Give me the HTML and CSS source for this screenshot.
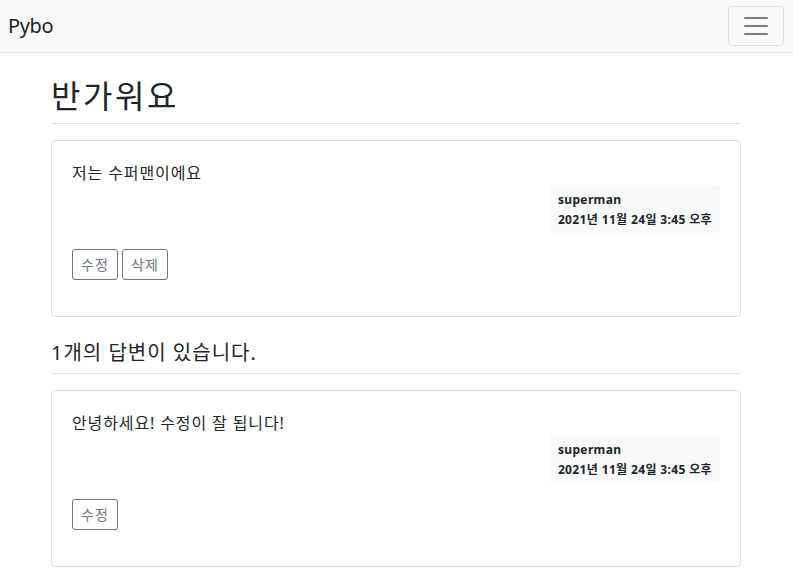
FILE: index.html
```html
<!DOCTYPE html>
<html lang="ko">
<head>
<meta charset="utf-8">
<title>Pybo</title>
<link rel="stylesheet" href="styles.css">
</head>
<body>
<nav class="navbar">
  <a class="brand" href="#">Pybo</a>
  <button class="toggler" type="button" aria-label="menu">
    <svg width="30" height="30" viewBox="0 0 30 30"><path d="M4 7h22M4 15h22M4 23h22" stroke="rgba(0,0,0,0.5)" stroke-width="2" stroke-linecap="round" fill="none"/></svg>
  </button>
</nav>
<main class="container">
  <h2 class="subject">반가워요</h2>
  <div class="card">
    <div class="card-body">
      <div class="card-text">저는 수퍼맨이에요</div>
      <div class="meta-row">
        <div class="meta">
          <div class="author">superman</div>
          <div>2021년 11월 24일 3:45 오후</div>
        </div>
      </div>
      <div class="actions">
        <a href="#" class="btn">수정</a>
        <a href="#" class="btn">삭제</a>
      </div>
    </div>
  </div>
  <h5 class="answer-count">1개의 답변이 있습니다.</h5>
  <div class="card">
    <div class="card-body">
      <div class="card-text">안녕하세요! 수정이 잘 됩니다!</div>
      <div class="meta-row">
        <div class="meta">
          <div class="author">superman</div>
          <div>2021년 11월 24일 3:45 오후</div>
        </div>
      </div>
      <div class="actions">
        <a href="#" class="btn">수정</a>
      </div>
    </div>
  </div>
</main>
</body>
</html>
```
FILE: styles.css
```css
* { box-sizing: border-box; }
html, body { margin: 0; padding: 0; }
body {
  font-family: "Segoe UI", "Noto Sans", "Noto Sans CJK KR", sans-serif;
  font-size: 16px;
  line-height: 1.5;
  color: #212529;
  background: #fff;
}
.navbar {
  display: flex;
  align-items: center;
  justify-content: space-between;
  height: 53px;
  padding: 0 9px 1px 8px;
  background: #f8f9fa;
  border-bottom: 1px solid #dee2e6;
}
.brand {
  font-size: 20px;
  line-height: 30px;
  color: rgba(0,0,0,0.9);
  text-decoration: none;
  letter-spacing: -0.02em;
}
.toggler {
  display: flex;
  align-items: center;
  justify-content: center;
  width: 56px;
  height: 40px;
  padding: 4px 12px;
  background: transparent;
  border: 1px solid rgba(0,0,0,0.1);
  border-radius: 4px;
}
.toggler svg { display: block; }
.container {
  width: 721px;
  margin: 0 auto;
  padding: 0 16px 0 15px;
}
.subject {
  margin: 16px 0;
  padding: 8px 0;
  font-size: 32px;
  font-weight: 400;
  line-height: 38.4px;
  letter-spacing: 0.08em;
  border-bottom: 1px solid #dee2e6;
}
.answer-count {
  margin: 16px 0;
  padding: 8px 0;
  font-size: 20px;
  font-weight: 400;
  line-height: 24px;
  letter-spacing: 0.05em;
  border-bottom: 1px solid #dee2e6;
}
.card {
  margin: 16px 0;
  border: 1px solid rgba(0,0,0,0.125);
  border-radius: 4px;
  background: #fff;
}
.card-body {
  padding: 20px 20px 36px;
}
.card-text {
  line-height: 24px;
  letter-spacing: 0.055em;
}
.meta-row {
  display: flex;
  justify-content: flex-end;
}
.meta {
  padding: 9px 8px 7px;
  background: #f8f9fa;
  border-radius: 4px;
  font-size: 12px;
  font-weight: 700;
  line-height: 12px;
  letter-spacing: 0.03em;
  color: #212529;
  white-space: nowrap;
}
.author { margin-bottom: 8px; }
.actions {
  display: flex;
  gap: 4px;
  margin-top: 16px;
}
.btn {
  display: inline-block;
  padding: 4px 8px;
  font-size: 14px;
  line-height: 21px;
  letter-spacing: 0.08em;
  color: #6c757d;
  border: 1px solid #6c757d;
  border-radius: 3px;
  text-decoration: none;
}
```
